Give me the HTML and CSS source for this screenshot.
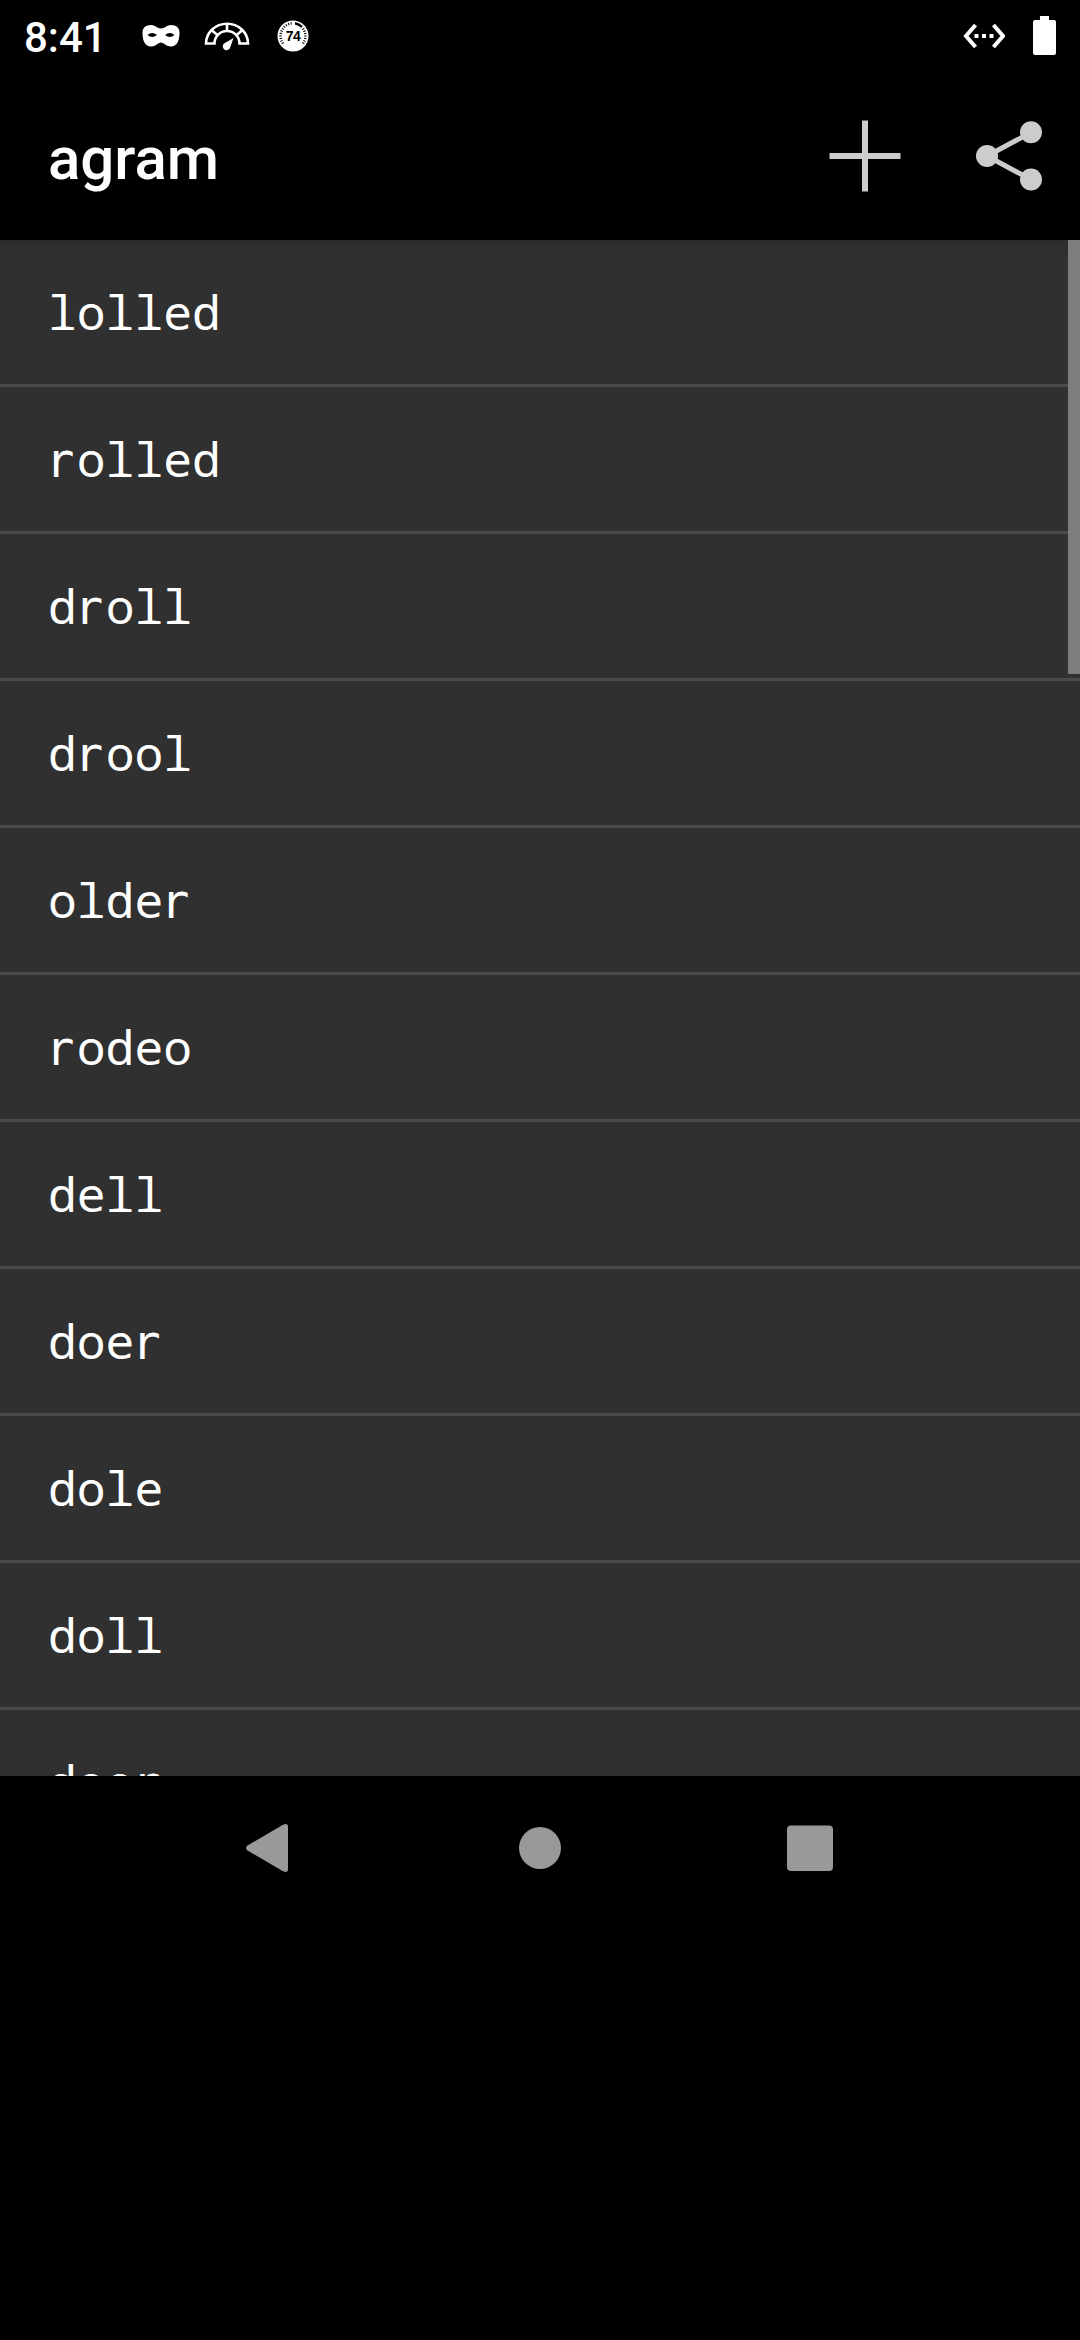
FILE: index.html
```html
<!DOCTYPE html>
<html lang="en">
<head>
<meta charset="utf-8">
<title>agram</title>
<link rel="stylesheet" href="styles.css">
</head>
<body>
<div class="screen">
  <div class="status">
    <span class="clock">8:41</span>
    <svg class="mask" width="40" height="24" viewBox="0 0 40 24"><path fill="#fff" fill-rule="evenodd" d="M10 1C14 1 16.500 4.500 20 4.500S26 1 30 1C35.500 1 38.500 4 38.500 8.500C38.500 16 36.500 22.500 30 22.500C25 22.500 23 18.500 20 18.500S15 22.500 10 22.500C3.500 22.500 1.500 16 1.500 8.500C1.500 4 4.500 1 10 1ZM6.500 11Q11 15 16 11Q11 7 6.500 11ZM24 11Q29 15 33.500 11Q29 7 24 11Z"/></svg>
    <svg class="gauge" width="46" height="30" viewBox="0 0 46 30"><g fill="none" stroke="#fff" stroke-width="2.600"><path d="M2 21.500A21 19.800 0 0 1 44 21.500H35.500A12.500 12.500 0 0 0 10.500 21.500Z"/><path d="M8 8.500L14 13.500M23 2V9M38 8.500L32 13.500"/></g><path fill="#fff" d="M29.500 16L26.300 25A3.800 3.800 0 1 1 20 21.500Z"/></svg>
    <svg class="badge" width="32" height="32" viewBox="0 0 32 32"><circle cx="16" cy="16" r="15.500" fill="#fff"/><path d="M6 23.500A12.700 12.700 0 0 1 16 3.300" fill="none" stroke="#000" stroke-width="2.500" stroke-dasharray="1 1.500"/><path d="M18 3.300A12.700 12.700 0 0 1 25 7" fill="none" stroke="#000" stroke-width="2.400"/><path d="M26 8.500A12.700 12.700 0 0 1 26 23.500" fill="none" stroke="#000" stroke-width="2.500" stroke-dasharray="1 1.500"/><text class="badge-text" x="16" y="21" text-anchor="middle">74</text></svg>
    <span class="spacer"></span>
    <svg class="ethernet" width="42" height="26" viewBox="0 0 42 26"><path d="M12.500 2L3 13L12.500 24M30.500 2L40 13L30.500 24" fill="none" stroke="#fff" stroke-width="4"/><path d="M11.500 11h4v4h-4zM19 11h4v4h-4zM26.500 11h4v4h-4z" fill="#fff"/></svg>
    <svg class="battery" width="23" height="39" viewBox="0 0 23 39"><path fill="#fff" d="M7 0h9v4h5q2 0 2 2v31q0 2-2 2H2q-2 0-2-2V6q0-2 2-2h5z"/></svg>
  </div>
  <header class="bar">
    <h1 class="title">agram</h1>
    <svg class="plus" width="72" height="72" viewBox="0 0 72 72"><path d="M36 .500V71.500M.500 36H71.500" stroke="#ccc" stroke-width="6"/></svg>
    <svg class="share" width="66" height="70" viewBox="0 0 66 70"><path d="M55 11.500L11 35L55 58.500" fill="none" stroke="#ccc" stroke-width="5"/><g fill="#ccc"><circle cx="55" cy="11.200" r="11"/><circle cx="11" cy="35" r="11"/><circle cx="55" cy="58.500" r="11"/></g></svg>
  </header>
  <main class="list">
    <div class="row">lolled</div>
    <div class="row"><span class="plain">r</span>olled</div>
    <div class="row">d<span class="plain">r</span>oll</div>
    <div class="row">d<span class="plain">r</span>ool</div>
    <div class="row">olde<span class="plain">r</span></div>
    <div class="row"><span class="plain">r</span>odeo</div>
    <div class="row">dell</div>
    <div class="row">doe<span class="plain">r</span></div>
    <div class="row">dole</div>
    <div class="row">doll</div>
    <div class="row">doo<span class="plain">r</span></div>
    <div class="thumb"></div>
  </main>
  <nav class="nav">
    <svg width="270" height="144" viewBox="0 0 270 144"><path d="M112.500 69.500L148 48.700Q153 46.500 153 51V93Q153 97.500 148 95.300L112.500 74.500Q109.500 72 112.500 69.500Z" fill="#999"/></svg>
    <svg width="270" height="144" viewBox="0 0 270 144"><circle cx="135" cy="72" r="21" fill="#999"/></svg>
    <svg width="270" height="144" viewBox="0 0 270 144"><rect x="112" y="49.500" width="46" height="45.500" rx="4" fill="#999"/></svg>
  </nav>
</div>
</body>
</html>
```
FILE: styles.css
```css
body { margin: 0; background: #000; }
svg { display: block; flex: none; }
.screen { width: 1080px; height: 2340px; background: #000; color: #fff; font-family: Roboto, sans-serif; overflow: hidden; }
.status { display: flex; align-items: flex-start; height: 72px; padding: 0 24px; box-sizing: border-box; }
.clock { width: 117px; font-size: 42px; font-weight: 500; line-height: 49px; padding-top: 13px; box-sizing: border-box; white-space: nowrap; }
.mask { margin-top: 24px; }
.gauge { margin: 22px 0 0 23px; }
.badge { margin: 20px 0 0 27px; }
.badge-text { font: 700 14px "Liberation Sans", sans-serif; letter-spacing: -0.5px; fill: #000; }
.spacer { flex: 1; }
.ethernet { margin: 23px 28px 0 0; }
.battery { margin-top: 16px; }
.bar { display: flex; align-items: flex-start; height: 168px; padding: 0 38px 0 48px; box-sizing: border-box; }
.title { flex: 1; margin: 52px 0 0; font-size: 60px; font-weight: 500; line-height: 70px; }
.plus { margin: 48px 75px 0 0; }
.share { margin-top: 49px; }
.list { position: relative; height: 1536px; overflow: hidden; background: linear-gradient(#2b2b2b, #303030 14px); }
.row { height: 147px; box-sizing: border-box; border-bottom: 3px solid #4a4a4a; padding-left: 48px; font: 48px/144px "Droid Sans Mono", "Noto Sans Mono", "Liberation Mono", monospace; }
.plain { font-family: "Droid Sans Mono", "DejaVu Sans Mono", monospace; letter-spacing: -0.1px; line-height: 0; margin: 0 2.6px 0 -2.6px; }
.thumb { position: absolute; right: 0; top: 0; width: 12px; height: 434px; background: #7d7d7d; }
.nav { display: flex; justify-content: center; height: 144px; }
```
